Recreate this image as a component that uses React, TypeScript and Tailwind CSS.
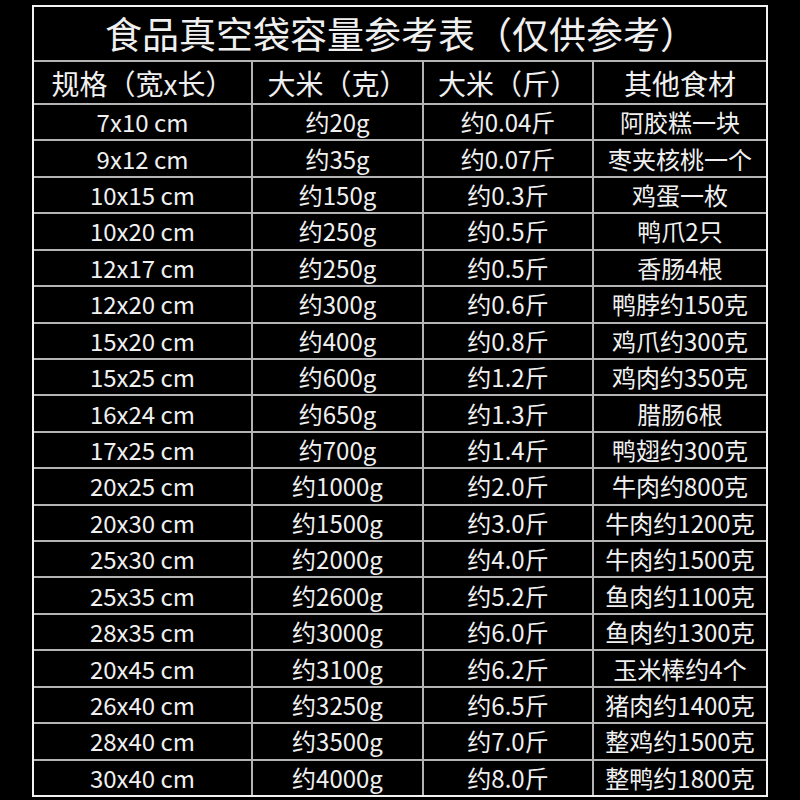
const headers = ["规格（宽x长）", "大米（克）", "大米（斤）", "其他食材"]

const rows: [string, string, string, string][] = [
  ["7x10 cm", "约20g", "约0.04斤", "阿胶糕一块"],
  ["9x12 cm", "约35g", "约0.07斤", "枣夹核桃一个"],
  ["10x15 cm", "约150g", "约0.3斤", "鸡蛋一枚"],
  ["10x20 cm", "约250g", "约0.5斤", "鸭爪2只"],
  ["12x17 cm", "约250g", "约0.5斤", "香肠4根"],
  ["12x20 cm", "约300g", "约0.6斤", "鸭脖约150克"],
  ["15x20 cm", "约400g", "约0.8斤", "鸡爪约300克"],
  ["15x25 cm", "约600g", "约1.2斤", "鸡肉约350克"],
  ["16x24 cm", "约650g", "约1.3斤", "腊肠6根"],
  ["17x25 cm", "约700g", "约1.4斤", "鸭翅约300克"],
  ["20x25 cm", "约1000g", "约2.0斤", "牛肉约800克"],
  ["20x30 cm", "约1500g", "约3.0斤", "牛肉约1200克"],
  ["25x30 cm", "约2000g", "约4.0斤", "牛肉约1500克"],
  ["25x35 cm", "约2600g", "约5.2斤", "鱼肉约1100克"],
  ["28x35 cm", "约3000g", "约6.0斤", "鱼肉约1300克"],
  ["20x45 cm", "约3100g", "约6.2斤", "玉米棒约4个"],
  ["26x40 cm", "约3250g", "约6.5斤", "猪肉约1400克"],
  ["28x40 cm", "约3500g", "约7.0斤", "整鸡约1500克"],
  ["30x40 cm", "约4000g", "约8.0斤", "整鸭约1800克"],
]

const font = { fontFamily: '"Noto Sans CJK SC", "Noto Sans", sans-serif' }

export default function App() {
  return (
    <div className="h-[800px] w-[800px] bg-black pl-[32px] pt-[5px]" style={font}>
      <div className="flex h-[792px] w-[736px] flex-col border-2 border-[#f2f2f2] text-[#f0f0f0]">
        <div className="flex h-[53px] items-center justify-center pl-[2px] text-[37px] leading-none">
          食品真空袋容量参考表（仅供参考）
        </div>
        <div className="grid h-[43px] grid-cols-[217px_171px_170px_174px] text-[28px] leading-none">
          {headers.map((h, i) => (
            <div
              key={h}
              className={`flex items-center justify-center border-t-2 border-[#b4b4b4] ${i > 0 ? "border-l-2" : ""}`}
            >
              {h}
            </div>
          ))}
        </div>
        {rows.map((row) => (
          <div key={row[0]} className="grid flex-1 grid-cols-[217px_171px_170px_174px] text-[24px] leading-none">
            {row.map((cell, i) => (
              <div
                key={i}
                className={`flex items-center justify-center border-t-2 border-[#b4b4b4] ${i > 0 ? "border-l-2" : ""}`}
              >
                {cell}
              </div>
            ))}
          </div>
        ))}
      </div>
    </div>
  )
}
